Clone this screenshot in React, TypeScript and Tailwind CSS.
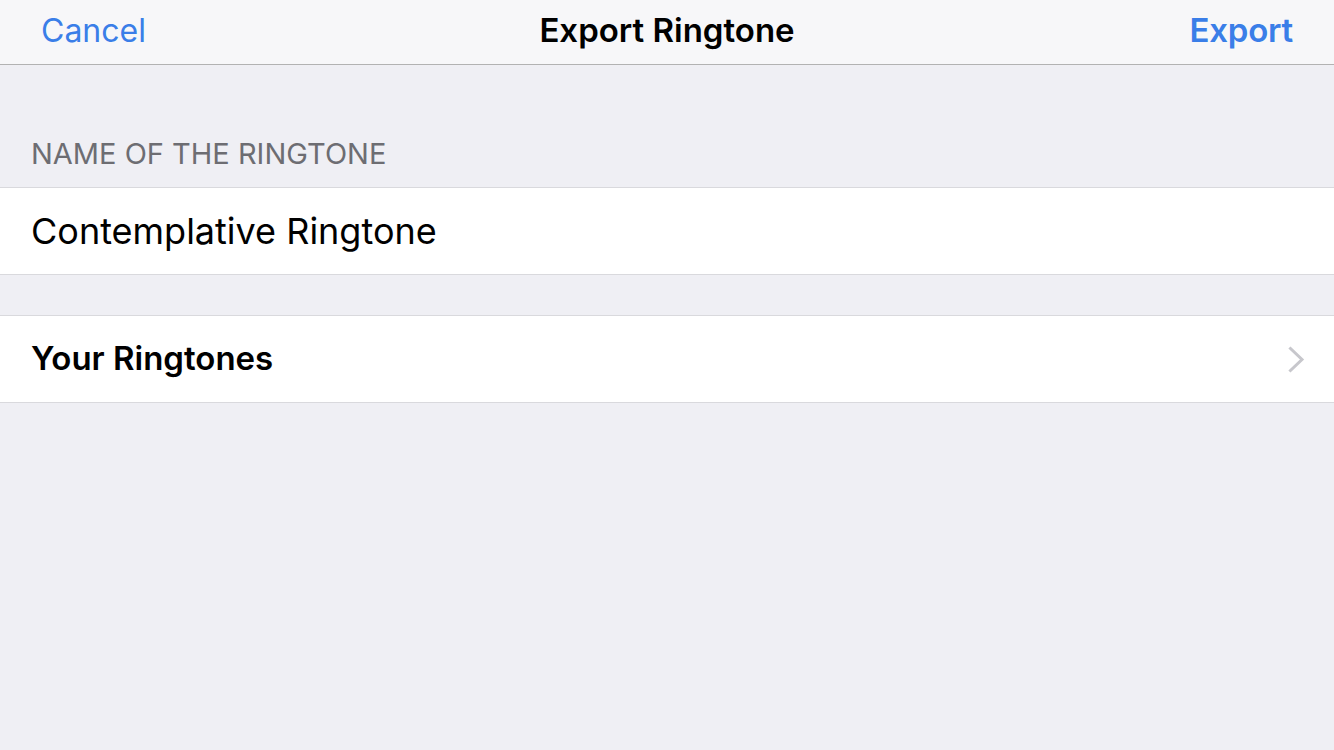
const font = { fontFamily: "Inter, 'Noto Sans', sans-serif" };

export default function App() {
  return (
    <div className="w-[1334px] h-[750px] bg-[#efeff4] flex flex-col" style={font}>
      <header className="h-[65px] bg-[#f7f7f9] border-b border-[#b2b2b2] flex items-center justify-between px-[41px] relative">
        <button className="text-[32px] text-[#3a7ee8] -mt-[2px]">Cancel</button>
        <h1 className="absolute left-1/2 -translate-x-1/2 text-[33px] font-semibold text-black -mt-[2px]">
          Export Ringtone
        </h1>
        <button className="text-[33px] font-semibold text-[#3a7ee8] tracking-[-0.2px] -mt-[2px]">Export</button>
      </header>

      <div className="h-[122px] flex items-end px-[31px] pb-[12px]">
        <span className="text-[29px] text-[#6d6d72] uppercase">Name of the ringtone</span>
      </div>

      <div className="h-[88px] bg-white border-y border-[#d9d9dd] flex items-center px-[31px]">
        <span className="text-[36px] text-black">Contemplative Ringtone</span>
      </div>

      <div className="h-[40px]" />

      <div className="h-[88px] bg-white border-y border-[#d9d9dd] flex items-center justify-between pl-[31px] pr-[29px]">
        <span className="text-[33px] font-semibold text-black">Your Ringtones</span>
        <svg width="17" height="27" viewBox="0 0 17 27" fill="none">
          <path d="M2.5 2.5 L14 13.5 L2.5 24.5" stroke="#c7c7cc" strokeWidth="3" strokeLinecap="square" />
        </svg>
      </div>
    </div>
  );
}
